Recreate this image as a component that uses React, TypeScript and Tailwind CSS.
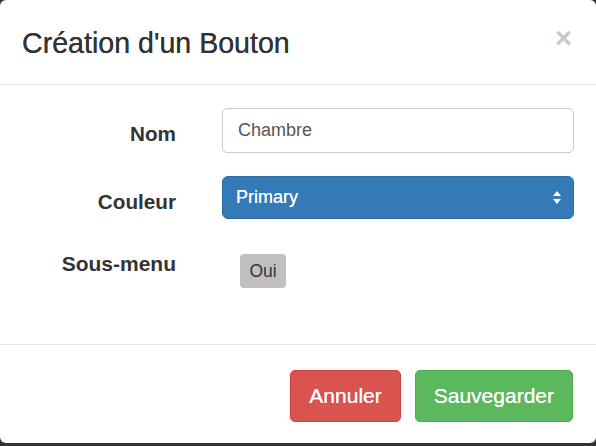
import React from "react";

export default function App() {
  return (
    <div
      className="w-[596px] h-[446px] bg-[#333333] overflow-hidden"
      style={{ fontFamily: '"Liberation Sans", Arial, Helvetica, sans-serif' }}
    >
      <div className="w-[596px] h-[443px] bg-white rounded-[6px] flex flex-col">
        {/* Header */}
        <div className="h-[85px] border-b border-[#e5e5e5] flex items-center justify-between pl-[22px] pr-[24px] shrink-0">
          <h4 className="text-[28.6px] leading-[32px] text-[#333333] m-0 pt-[2px] [text-shadow:0_0_0.6px_#333]">
            Création d'un Bouton
          </h4>
          <button className="text-[29px] font-bold leading-none text-[#c8c8c8] -mt-[7px]">×</button>
        </div>

        {/* Body */}
        <div className="h-[260px] border-b border-[#e5e5e5] pt-[23px] flex flex-col shrink-0">
          <div className="flex items-start h-[45px]">
            <label className="w-[176px] text-right font-bold text-[20.7px] leading-[45px] mt-[3px] text-[#333333]">Nom</label>
            <div className="ml-[46px] w-[352px] h-[45px] border border-[#cccccc] rounded-[5px] flex items-center pl-[15px] text-[18px] text-[#555555]">
              Chambre
            </div>
          </div>
          <div className="flex items-start h-[43px] mt-[23px]">
            <label className="w-[176px] text-right font-bold text-[20.7px] leading-[43px] mt-[4px] text-[#333333]">Couleur</label>
            <div className="ml-[46px] w-[352px] h-[43px] bg-[#337ab7] border border-[#2e6da4] rounded-[6px] flex items-center justify-between pl-[13px] pr-[12px] text-[18px] text-white">
              <span className="[text-shadow:0_0_0.5px_#fff]">Primary</span>
              <svg width="8" height="13" viewBox="0 0 8 13" className="block">
                <path d="M4 0 L8 5 L0 5 Z" fill="#ffffff" />
                <path d="M0 8 L8 8 L4 13 Z" fill="#ffffff" />
              </svg>
            </div>
          </div>
          <div className="flex items-start mt-[22px]">
            <label className="w-[176px] text-right font-bold text-[21px] leading-[45px] mt-[0px] text-[#333333]">Sous-menu</label>
            <div className="ml-[64px] mt-[13px] w-[46px] h-[34px] bg-[#c0c0c0] rounded-[4px] flex items-center justify-center text-[17.5px] text-[#333333]">
              Oui
            </div>
          </div>
        </div>

        {/* Footer */}
        <div className="flex justify-end gap-[14px] pt-[25px] pr-[23px]">
          <button className="h-[52px] px-[18px] bg-[#d9534f] border border-[#d43f3a] rounded-[5px] text-white text-[21px] [text-shadow:0_0_0.5px_#fff]">
            Annuler
          </button>
          <button className="h-[52px] px-[18px] bg-[#5cb85c] border border-[#4cae4c] rounded-[5px] text-white text-[21px] [text-shadow:0_0_0.5px_#fff]">
            Sauvegarder
          </button>
        </div>
      </div>
    </div>
  );
}
